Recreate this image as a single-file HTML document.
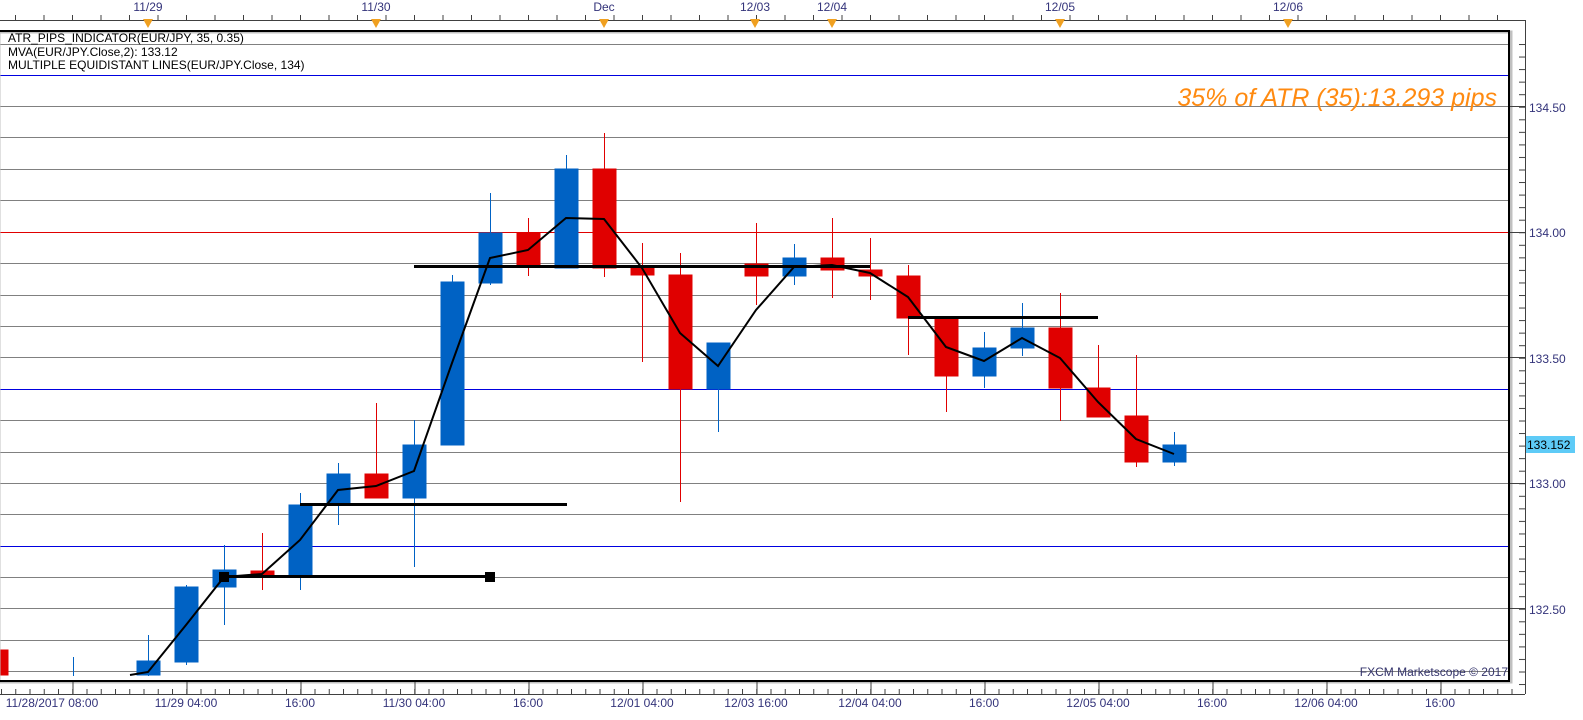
<!DOCTYPE html>
<html><head><style>
html,body{margin:0;padding:0;background:#fff;width:1583px;height:720px;overflow:hidden;}
svg{display:block;font-family:"Liberation Sans",sans-serif;}
</style></head><body>
<svg width="1583" height="720" viewBox="0 0 1583 720" xmlns="http://www.w3.org/2000/svg">
<defs>
<pattern id="bmin" x="1" y="0" width="14.25" height="720" patternUnits="userSpaceOnUse"><rect x="0" y="0" width="1" height="720" fill="#404040"/></pattern>
<pattern id="bmaj" x="72.5" y="0" width="114" height="720" patternUnits="userSpaceOnUse"><rect x="0" y="0" width="1" height="720" fill="#404040"/></pattern>
<pattern id="tmin" x="15" y="0" width="28.5" height="720" patternUnits="userSpaceOnUse"><rect x="0" y="0" width="1" height="720" fill="#404040"/></pattern>
<pattern id="rmin" x="0" y="44" width="1583" height="12.55" patternUnits="userSpaceOnUse"><rect x="0" y="0" width="1583" height="1" fill="#404040"/></pattern>
</defs>
<rect width="1583" height="720" fill="#fff"/>
<g stroke="#808080" stroke-width="1" shape-rendering="crispEdges">
<line x1="0" x2="1510" y1="44.5" y2="44.5"/>
<line x1="0" x2="1510" y1="106.5" y2="106.5"/>
<line x1="0" x2="1510" y1="137.5" y2="137.5"/>
<line x1="0" x2="1510" y1="169.5" y2="169.5"/>
<line x1="0" x2="1510" y1="200.5" y2="200.5"/>
<line x1="0" x2="1510" y1="263.5" y2="263.5"/>
<line x1="0" x2="1510" y1="295.5" y2="295.5"/>
<line x1="0" x2="1510" y1="326.5" y2="326.5"/>
<line x1="0" x2="1510" y1="357.5" y2="357.5"/>
<line x1="0" x2="1510" y1="420.5" y2="420.5"/>
<line x1="0" x2="1510" y1="452.5" y2="452.5"/>
<line x1="0" x2="1510" y1="483.5" y2="483.5"/>
<line x1="0" x2="1510" y1="514.5" y2="514.5"/>
<line x1="0" x2="1510" y1="577.5" y2="577.5"/>
<line x1="0" x2="1510" y1="608.5" y2="608.5"/>
<line x1="0" x2="1510" y1="640.5" y2="640.5"/>
<line x1="0" x2="1510" y1="671.5" y2="671.5"/>
</g>
<g stroke="#0000e0" shape-rendering="crispEdges">
<line x1="0" x2="1510" y1="75.5" y2="75.5"/>
<line x1="0" x2="1510" y1="389.5" y2="389.5"/>
<line x1="0" x2="1510" y1="546.5" y2="546.5"/>
</g>
<line x1="0" x2="1510" y1="232.5" y2="232.5" stroke="#e00000" shape-rendering="crispEdges"/>

<g shape-rendering="crispEdges">
<g stroke="#0062c4" fill="#0062c4">
<line x1="73.5" x2="73.5" y1="657" y2="676"/>
<line x1="148.5" x2="148.5" y1="635" y2="676"/><rect x="137" y="661" width="23" height="14"/>
<line x1="186.5" x2="186.5" y1="585" y2="665"/><rect x="175" y="587" width="23" height="75"/>
<line x1="224.5" x2="224.5" y1="545" y2="625"/><rect x="213" y="570" width="23" height="17"/>
<line x1="300.5" x2="300.5" y1="493" y2="590"/><rect x="289" y="505" width="23" height="71"/>
<line x1="338.5" x2="338.5" y1="463" y2="525"/><rect x="327" y="474" width="23" height="31"/>
<line x1="414.5" x2="414.5" y1="420" y2="567"/><rect x="403" y="445" width="23" height="53"/>
<line x1="452.5" x2="452.5" y1="275" y2="445"/><rect x="441" y="282" width="23" height="163"/>
<line x1="490.5" x2="490.5" y1="193" y2="285"/><rect x="479" y="233" width="23" height="50"/>
<line x1="566.5" x2="566.5" y1="155" y2="268"/><rect x="555" y="169" width="23" height="99"/>
<line x1="718.5" x2="718.5" y1="343" y2="432"/><rect x="707" y="343" width="23" height="46"/>
<line x1="794.5" x2="794.5" y1="244" y2="285"/><rect x="783" y="258" width="23" height="18"/>
<line x1="984.5" x2="984.5" y1="332" y2="388"/><rect x="973" y="348" width="23" height="28"/>
<line x1="1022.5" x2="1022.5" y1="303" y2="356"/><rect x="1011" y="328" width="23" height="20"/>
<line x1="1174.5" x2="1174.5" y1="432" y2="466"/><rect x="1163" y="445" width="23" height="17"/>
</g>
<g stroke="#e00000" fill="#e00000">
<rect x="0" y="650" width="8" height="25"/>
<line x1="262.5" x2="262.5" y1="533" y2="590"/><rect x="251" y="571" width="23" height="5"/>
<line x1="376.5" x2="376.5" y1="403" y2="498"/><rect x="365" y="474" width="23" height="24"/>
<line x1="528.5" x2="528.5" y1="218" y2="276"/><rect x="517" y="233" width="23" height="32"/>
<line x1="604.5" x2="604.5" y1="133" y2="277"/><rect x="593" y="169" width="23" height="99"/>
<line x1="642.5" x2="642.5" y1="243" y2="362"/><rect x="631" y="268" width="23" height="7"/>
<line x1="680.5" x2="680.5" y1="253" y2="502"/><rect x="669" y="275" width="23" height="114"/>
<line x1="756.5" x2="756.5" y1="223" y2="305"/><rect x="745" y="264" width="23" height="12"/>
<line x1="832.5" x2="832.5" y1="218" y2="298"/><rect x="821" y="258" width="23" height="12"/>
<line x1="870.5" x2="870.5" y1="238" y2="300"/><rect x="859" y="270" width="23" height="6"/>
<line x1="908.5" x2="908.5" y1="265" y2="355"/><rect x="897" y="276" width="23" height="42"/>
<line x1="946.5" x2="946.5" y1="318" y2="412"/><rect x="935" y="318" width="23" height="58"/>
<line x1="1060.5" x2="1060.5" y1="293" y2="421"/><rect x="1049" y="328" width="23" height="60"/>
<line x1="1098.5" x2="1098.5" y1="345" y2="417"/><rect x="1087" y="388" width="23" height="29"/>
<line x1="1136.5" x2="1136.5" y1="355" y2="467"/><rect x="1125" y="416" width="23" height="46"/>
</g>
</g>

<g stroke="#000" stroke-width="3">
<line x1="414" x2="870" y1="266.5" y2="266.5"/>
<line x1="908" x2="1098" y1="317.5" y2="317.5"/>
<line x1="300" x2="567" y1="504.5" y2="504.5"/>
<line x1="224" x2="490" y1="576.5" y2="576.5"/>
</g>
<rect x="219" y="572" width="10" height="10" fill="#000"/>
<rect x="485" y="572" width="10" height="10" fill="#000"/>

<polyline fill="none" stroke="#000" stroke-width="2" points="130,675 148,672 186,625 224,577 262,574 300,540 338,490 376,486 414,471 452,363 490,258 528,250 566,218 604,219 642,268 680,333 718,366 756,310 794,267 832,265 870,273 908,297 946,347 984,361 1022,338 1060,358 1098,402 1136,439 1174,454"/>

<rect x="-1" y="32" width="1512" height="650" fill="none" stroke="#c0c0c0" stroke-width="3"/>
<rect x="-2" y="31" width="1511" height="650" fill="none" stroke="#000" stroke-width="2"/>

<g stroke="#404040" shape-rendering="crispEdges">
<line x1="0" x2="1525" y1="20.5" y2="20.5"/>
<line x1="1525.5" x2="1525.5" y1="20" y2="694"/>
<line x1="0" x2="1525" y1="694.5" y2="694.5"/>
</g>
<rect x="0" y="689" width="1525" height="5" fill="url(#bmin)"/>
<rect x="0" y="682" width="1525" height="12" fill="url(#bmaj)"/>
<rect x="0" y="15" width="1525" height="5" fill="url(#tmin)"/>
<rect x="1519" y="38" width="6" height="656" fill="url(#rmin)"/>
<g stroke="#404040" shape-rendering="crispEdges">
<line x1="1510" x2="1525" y1="106.5" y2="106.5"/>
<line x1="1510" x2="1525" y1="232.5" y2="232.5"/>
<line x1="1510" x2="1525" y1="357.5" y2="357.5"/>
<line x1="1510" x2="1525" y1="483.5" y2="483.5"/>
<line x1="1510" x2="1525" y1="608.5" y2="608.5"/>
</g>

<g fill="#33337a" font-size="12" text-anchor="middle">
<text x="148" y="11">11/29</text>
<text x="376" y="11">11/30</text>
<text x="604" y="11">Dec</text>
<text x="755" y="11">12/03</text>
<text x="832" y="11">12/04</text>
<text x="1060" y="11">12/05</text>
<text x="1288" y="11">12/06</text>
</g>
<g fill="#f0a020">
<path d="M143,19 h10 l-5,9z"/><path d="M371,19 h10 l-5,9z"/><path d="M599,19 h10 l-5,9z"/><path d="M750,19 h10 l-5,9z"/><path d="M827,19 h10 l-5,9z"/><path d="M1055,19 h10 l-5,9z"/><path d="M1283,19 h10 l-5,9z"/>
</g>

<g fill="#000" font-size="12">
<text x="8" y="42">ATR_PIPS_INDICATOR(EUR/JPY, 35, 0.35)</text>
<text x="8" y="56">MVA(EUR/JPY.Close,2): 133.12</text>
<text x="8" y="69">MULTIPLE EQUIDISTANT LINES(EUR/JPY.Close, 134)</text>
</g>
<text x="1497" y="106" fill="#ff8a10" font-size="25" font-style="italic" text-anchor="end">35% of ATR (35):13.293 pips</text>
<text x="1508" y="676" fill="#33336b" font-size="12" text-anchor="end">FXCM Marketscope © 2017</text>

<g fill="#33337a" font-size="12">
<text x="1529" y="112">134.50</text>
<text x="1529" y="237">134.00</text>
<text x="1529" y="363">133.50</text>
<text x="1529" y="488">133.00</text>
<text x="1529" y="614">132.50</text>
</g>
<rect x="1526" y="436" width="49" height="17" fill="#5ecbf7"/>
<text x="1527" y="449" fill="#000" font-size="12">133.152</text>

<g fill="#33337a" font-size="12" text-anchor="middle">
<text x="52" y="707">11/28/2017 08:00</text>
<text x="186" y="707">11/29 04:00</text>
<text x="300" y="707">16:00</text>
<text x="414" y="707">11/30 04:00</text>
<text x="528" y="707">16:00</text>
<text x="642" y="707">12/01 04:00</text>
<text x="756" y="707">12/03 16:00</text>
<text x="870" y="707">12/04 04:00</text>
<text x="984" y="707">16:00</text>
<text x="1098" y="707">12/05 04:00</text>
<text x="1212" y="707">16:00</text>
<text x="1326" y="707">12/06 04:00</text>
<text x="1440" y="707">16:00</text>
</g>
</svg>
</body></html>
